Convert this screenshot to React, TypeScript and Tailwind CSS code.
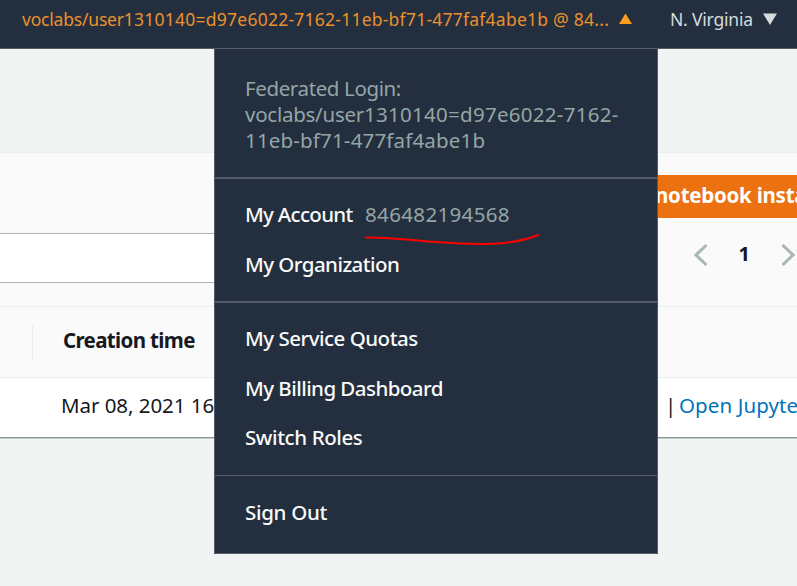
import React from "react";

function AccountMenu() {
  return (
    <div className="absolute top-[48px] left-[214px] z-10 h-[506px] w-[444px] border border-[#545b64] bg-[#232f3e] text-[20.5px] font-medium whitespace-nowrap text-[#fafafa]">
      <div className="h-[130px] border-b-2 border-[#545b64] pt-[26px] pl-[30px] font-normal leading-[26px] text-[#95a5a6]">
        <div className="tracking-[-0.38px]">Federated Login:</div>
        <div className="tracking-[0.28px]"><span className="tracking-[-0.25px]">voclabs/user</span>1310140=d97e6022-7162-</div>
        <div className="tracking-[0.17px]">11eb-bf71-477faf4abe1b</div>
      </div>
      <div className="relative h-[124px] border-b-2 border-[#545b64] pt-[10px] pl-[30px] leading-[50px]">
        <div className="flex">
          <span className="w-[120px] tracking-[-0.7px]">My Account</span>
          <span className="font-normal tracking-[0.35px] text-[#95a5a6]">846482194568</span>
        </div>
        <div className="tracking-[-0.55px]">My Organization</div>
        <svg className="absolute top-[54px] left-[148px]" width="180" height="14" viewBox="0 0 180 14" fill="none" stroke="#f00" strokeWidth="2" strokeLinecap="round">
          <path d="M3 4.5C26 4.2 48 7 73 9C112 12 149 13 175 2" />
        </svg>
      </div>
      <div className="h-[173px] border-b border-[#545b64] pt-[10px] pl-[30px]">
        <div className="h-[50px] leading-[50px] tracking-[-0.5px]">My Service Quotas</div>
        <div className="h-[49px] leading-[50px] tracking-[-0.55px]">My Billing Dashboard</div>
        <div className="h-[50px] leading-[50px] tracking-[-0.4px]">Switch Roles</div>
      </div>
      <div className="pt-[11px] pl-[30px] leading-[50px] tracking-[-0.3px]">Sign Out</div>
    </div>
  );
}

export default function App() {
  return (
    <div className="relative h-[586px] w-[797px] overflow-hidden bg-[#f2f3f3] font-['Noto_Sans','Open_Sans',sans-serif] text-[#16191f]">
      <header className="flex h-[49px] items-start border-b border-[#545b64] bg-[#232f3e] pl-[22px] text-[17.5px] leading-[38px] whitespace-nowrap">
        <span className="w-[597px] tracking-[0.24px] text-[#ec912d]"><span className="tracking-[-0.2px]">voclabs/user</span>1310140=d97e6022-7162-11eb-bf71-477faf4abe1b @ 84...</span>
        <svg className="mt-[13px] w-[13px]" height="11" viewBox="0 0 13 11"><path d="M6.5 0.5L13 11H0Z" fill="#ff9d1e" /></svg>
        <span className="ml-[38px] w-[93px] tracking-[-0.2px] text-[#d5dbdb]">N. Virginia</span>
        <svg className="mt-[13px] w-[14px]" height="12" viewBox="0 0 14 12"><path d="M0 0.5H14L7 12Z" fill="#d5dbdb" /></svg>
      </header>

      <main className="mt-[103px] h-[286px] border-t border-b border-t-[#eaeded] border-b-[#879596] bg-[#fafafa] shadow-[0_1px_0_#c3caca]">
        <div className="flex h-[153px] justify-between">
          <div className="mt-[80px] h-[50px] w-[400px] border-y border-[#aab7b8] bg-white" />
          <div className="w-[147px] shrink-0">
            <div className="mt-[22px] h-[43px] overflow-hidden bg-[#ec7211] pl-[5px] text-[20.5px] leading-[41px] font-bold tracking-[-0.25px] whitespace-nowrap text-white">notebook instance</div>
            <div className="flex h-[74px] items-center pl-[43.5px]">
              <svg width="14" height="22" viewBox="0 0 14 22" fill="none" stroke="#aab7b8" strokeWidth="3"><path d="M12.5 1L2 11L12.5 21" /></svg>
              <span className="ml-[31px] w-[26px] pb-[2px] text-[20px] font-bold">1</span>
              <svg className="ml-[16px] shrink-0" width="14" height="22" viewBox="0 0 14 22" fill="none" stroke="#aab7b8" strokeWidth="3"><path d="M1.5 1L12 11L1.5 21" /></svg>
            </div>
          </div>
        </div>
        <div className="flex h-[72px] items-center border-y border-[#eaeded] pl-[32px]">
          <div className="h-[35px] border-l border-[#eaeded] pl-[30px] text-[20.5px] leading-[31px] font-bold tracking-[-0.65px]">Creation time</div>
        </div>
        <div className="flex h-[59px] justify-between overflow-hidden bg-white pl-[61px] text-[20.5px] leading-[54px] whitespace-nowrap">
          <span className="tracking-[-0.05px]">Mar 08, 2021 16:42 UTC</span>
          <div className="flex w-[147px] shrink-0">
            <span className="w-[15px] shrink-0" />
            <span className="w-[14px] shrink-0">|</span>
            <span className="shrink-0 tracking-[0.1px] text-[#0073bb]">Open JupyterLab</span>
          </div>
        </div>
      </main>
      <AccountMenu />
    </div>
  );
}
